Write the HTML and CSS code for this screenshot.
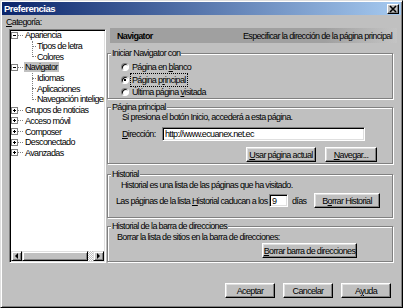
FILE: index.html
```html
<!DOCTYPE html>
<html lang="es">
<head>
    <meta charset="UTF-8">
    <meta name="viewport" content="width=device-width, initial-scale=1.0">
    <title>Preferencias</title>
    <link rel="stylesheet" href="styles.css">
</head>
<body>
    <div class="window">
        <div class="titlebar">
            <span class="title">Preferencias</span>
            <span class="close-btn">
                <svg width="10" height="8" viewBox="0 0 10 8">
                    <path d="M2 1 L8 7 M8 1 L2 7" stroke="#000" stroke-width="1.6"/>
                </svg>
            </span>
        </div>

        <div class="category-label"><u>C</u>ategoría:</div>

        <div class="main">
            <div class="tree">
                <div class="tree-items">
                    <div class="node root"><span class="expander open"></span><span class="dash"></span><span class="label">Apariencia</span></div>
                    <div class="children">
                        <div class="node child"><span class="label">Tipos de letra</span></div>
                        <div class="node child"><span class="label">Colores</span></div>
                    </div>
                    <div class="node root"><span class="expander open"></span><span class="dash"></span><span class="label selected">Navigator</span></div>
                    <div class="children">
                        <div class="node child"><span class="label">Idiomas</span></div>
                        <div class="node child"><span class="label">Aplicaciones</span></div>
                        <div class="node child"><span class="label">Navegación inteligente</span></div>
                    </div>
                    <div class="node root"><span class="expander"></span><span class="dash"></span><span class="label">Grupos de noticias</span></div>
                    <div class="node root"><span class="expander"></span><span class="dash"></span><span class="label">Acceso móvil</span></div>
                    <div class="node root"><span class="expander"></span><span class="dash"></span><span class="label">Composer</span></div>
                    <div class="node root"><span class="expander"></span><span class="dash"></span><span class="label">Desconectado</span></div>
                    <div class="node root"><span class="expander"></span><span class="dash"></span><span class="label">Avanzadas</span></div>
                </div>
                <div class="hscroll">
                    <span class="sb-btn"><span class="arrow-left"></span></span>
                    <span class="sb-thumb"></span>
                    <span class="sb-track"></span>
                    <span class="sb-btn"><span class="arrow-right"></span></span>
                </div>
            </div>

            <div class="panel">
                <div class="panel-header">
                    <b>Navigator</b>
                    <span>Especificar la dirección de la página principal</span>
                </div>

                <div class="group g-start">
                    <span class="group-title">Iniciar Navigator con</span>
                    <div class="radio-row"><span class="radio"></span><span class="radio-text">Página en <u>b</u>lanco</span></div>
                    <div class="radio-row"><span class="radio on"></span><span class="radio-text focus">Página p<u>r</u>incipal</span></div>
                    <div class="radio-row"><span class="radio"></span><span class="radio-text">Última página <u>v</u>isitada</span></div>
                </div>

                <div class="group g-home">
                    <span class="group-title">Página principal</span>
                    <div class="note">Si presiona el botón Inicio, accederá a esta página.</div>
                    <div class="addr-row">
                        <label for="homeUrl"><u>D</u>irección:</label>
                        <input type="text" id="homeUrl" class="field url" value="http://www.ecuanex.net.ec">
                    </div>
                    <div class="btn-row">
                        <button type="button" class="btn btn-current"><u>U</u>sar página actual</button>
                        <button type="button" class="btn btn-browse"><u>N</u>avegar...</button>
                    </div>
                </div>

                <div class="group g-history">
                    <span class="group-title">Historial</span>
                    <div class="note">Historial es una lista de las páginas que ha visitado.</div>
                    <div class="history-row">
                        <span class="days-text">Las páginas de la lista <u>H</u>istorial caducan a los</span>
                        <input type="text" class="field days" value="9">
                        <span class="days-unit">días</span>
                        <button type="button" class="btn btn-clear">B<u>o</u>rrar Historial</button>
                    </div>
                </div>

                <div class="group g-bar">
                    <span class="group-title">Historial de la barra de direcciones</span>
                    <div class="note">Borrar la lista de sitios en la barra de direcciones:</div>
                    <button type="button" class="btn btn-bar"><u>B</u>orrar barra de direcciones</button>
                </div>
            </div>
        </div>

        <div class="footer">
            <button type="button" class="btn btn-foot">Aceptar</button>
            <button type="button" class="btn btn-foot">Cancelar</button>
            <button type="button" class="btn btn-foot">A<u>y</u>uda</button>
        </div>
    </div>
</body>
</html>
```

FILE: styles.css
```css
* {
    box-sizing: border-box;
}
body {
    margin: 0;
    background-color: #c0c0c0;
    font-family: "Liberation Sans", Arial, sans-serif;
    font-size: 9px;
    letter-spacing: -0.65px;
    color: #000;
}
.window {
    width: 403px;
    height: 308px;
    display: flex;
    flex-direction: column;
    background-color: #c0c0c0;
    border: 1px solid;
    border-color: #dfdfdf #000 #000 #dfdfdf;
    box-shadow: inset 1px 1px 0 #fff, inset -1px -1px 0 #808080;
    padding: 1px;
}
.titlebar {
    height: 13px;
    display: flex;
    align-items: center;
    justify-content: space-between;
    padding: 0 2px;
    background: linear-gradient(to right, #0a246a, #a6caf0);
    color: #fff;
    font-weight: bold;
    font-size: 9.5px;
    letter-spacing: -0.5px;
}
.close-btn {
    width: 12px;
    height: 10px;
    display: flex;
    align-items: center;
    justify-content: center;
    background-color: #c0c0c0;
    border: 1px solid;
    border-color: #fff #000 #000 #fff;
    box-shadow: inset -1px -1px 0 #808080;
}
.category-label {
    height: 10px;
    line-height: 10px;
    margin-top: 2px;
    padding-left: 4px;
}

/* arbre des catégories */
.main {
    display: flex;
    align-items: flex-start;
    margin-top: 1px;
    padding-left: 7px;
}
.tree {
    width: 97px;
    height: 234px;
    margin-top: 1px;
    display: flex;
    flex-direction: column;
    background-color: #fff;
    border: 1px solid;
    border-color: #808080 #fff #fff #808080;
    box-shadow: inset 1px 1px 0 #000, inset -1px -1px 0 #dfdfdf;
    padding: 0 1px 1px 1px;
}
.tree-items {
    flex: 1;
    overflow: hidden;
}
.node {
    height: 10.7px;
    display: flex;
    align-items: center;
    white-space: nowrap;
    position: relative;
}
.expander {
    width: 7px;
    height: 7px;
    flex: none;
    border: 1px solid #808080;
    background-color: #fff;
    position: relative;
}
.expander::before {
    content: "";
    position: absolute;
    left: 1px;
    top: 2px;
    width: 3px;
    height: 1px;
    background-color: #000;
}
.expander::after {
    content: "";
    position: absolute;
    left: 2px;
    top: 1px;
    width: 1px;
    height: 3px;
    background-color: #000;
}
.expander.open::after {
    display: none;
}
.dash {
    width: 5px;
    flex: none;
    border-top: 1px dotted #808080;
}
.label {
    padding: 0 1px;
    margin-left: 1px;
    line-height: 10px;
}
.label.selected {
    background-color: #c0c0c0;
}
.children {
    position: relative;
}
.children::before {
    content: "";
    position: absolute;
    left: 21px;
    top: 0;
    bottom: 5px;
    border-left: 1px dotted #808080;
}
.node.child {
    padding-left: 24px;
}
.node.child::before {
    content: "";
    position: absolute;
    left: 21px;
    top: 5px;
    width: 4px;
    border-top: 1px dotted #808080;
}
.hscroll {
    height: 10px;
    display: flex;
}
.sb-btn, .sb-thumb {
    background-color: #c0c0c0;
    border: 1px solid;
    border-color: #dfdfdf #000 #000 #dfdfdf;
    box-shadow: inset 1px 1px 0 #fff, inset -1px -1px 0 #808080;
}
.sb-btn {
    width: 11px;
    display: flex;
    align-items: center;
    justify-content: center;
}
.sb-thumb {
    width: 66px;
}
.sb-track {
    flex: 1;
    background: repeating-conic-gradient(#fff 0 25%, #c0c0c0 0 50%) 0 0 / 2px 2px;
}
.arrow-left {
    border-right: 3px solid #000;
    border-top: 3px solid transparent;
    border-bottom: 3px solid transparent;
}
.arrow-right {
    border-left: 3px solid #000;
    border-top: 3px solid transparent;
    border-bottom: 3px solid transparent;
}

/* panneau de droite */
.panel {
    width: 290px;
    margin-left: 1px;
}
.panel-header {
    height: 15px;
    margin-left: 3px;
    display: flex;
    align-items: center;
    justify-content: space-between;
    padding: 0 5px 0 7px;
    background: linear-gradient(to right, #a0a0a0 75%, #c4c4c4);
}
.group {
    position: relative;
    margin-right: 4px;
    border: 1px solid #808080;
    box-shadow: 1px 1px 0 #fff, inset 1px 1px 0 #fff;
}
.group-title {
    position: absolute;
    top: -6px;
    left: 3px;
    padding: 0 1px;
    line-height: 10px;
    background-color: #c0c0c0;
    white-space: nowrap;
}
.note {
    line-height: 10px;
    white-space: nowrap;
}
.g-start {
    height: 46px;
    margin-top: 10px;
    padding: 7px 0 0 13px;
}
.radio-row {
    height: 12.5px;
    display: flex;
    align-items: center;
}
.radio {
    width: 8px;
    height: 8px;
    flex: none;
    margin-right: 3px;
    border-radius: 50%;
    background-color: #fff;
    border: 1px solid;
    border-color: #808080 #fff #fff #808080;
    box-shadow: inset 1px 1px 0 #000;
    position: relative;
}
.radio.on::after {
    content: "";
    position: absolute;
    left: 2px;
    top: 2px;
    width: 2px;
    height: 2px;
    background-color: #000;
}
.radio-text {
    line-height: 10px;
    padding: 1px 1px;
    margin-left: -1px;
}
.focus {
    outline: 1px dotted #000;
}
.g-home {
    height: 57px;
    margin-top: 8px;
    padding: 4px 15px 1px 14px;
}
.addr-row {
    height: 14px;
    display: flex;
    align-items: center;
    margin-top: 5px;
}
.addr-row label {
    width: 40px;
}
.field {
    height: 14px;
    background-color: #fff;
    border: 1px solid;
    border-color: #808080 #fff #fff #808080;
    box-shadow: inset 1px 1px 0 #000, inset -1px -1px 0 #dfdfdf;
    font: inherit;
    letter-spacing: inherit;
    padding: 0 2px;
    outline: none;
}
.url {
    width: 203px;
}
.btn-row {
    display: flex;
    justify-content: flex-end;
    gap: 9px;
    margin-top: 6px;
}
.btn {
    display: block;
    height: 15px;
    padding: 0;
    line-height: 13px;
    text-align: center;
    white-space: nowrap;
    background-color: #c0c0c0;
    border: 1px solid;
    border-color: #fff #000 #000 #fff;
    box-shadow: inset -1px -1px 0 #808080, inset 1px 1px 0 #dfdfdf;
    font: inherit;
    letter-spacing: inherit;
    color: #000;
}
.btn-current {
    width: 70px;
}
.btn-browse {
    width: 52px;
}
.g-history {
    height: 44px;
    margin-top: 10px;
    padding: 5px 0 0 13px;
}
.history-row {
    height: 15px;
    display: flex;
    align-items: center;
    margin-top: 3px;
    margin-left: -5px;
}
.days-text {
    width: 153px;
    white-space: nowrap;
}
.days {
    width: 19px;
    height: 13px;
}
.days-unit {
    width: 26px;
    padding-left: 4px;
}
.btn-clear {
    width: 66px;
}
.g-bar {
    height: 36px;
    margin-top: 8px;
    padding: 5px 0 0 9px;
}
.btn-bar {
    width: 95px;
    margin-top: 1px;
    margin-left: 145px;
}
.footer {
    display: flex;
    justify-content: flex-end;
    gap: 8px;
    margin-top: 20px;
    padding-right: 10px;
}
.btn-foot {
    width: 50px;
}
```
